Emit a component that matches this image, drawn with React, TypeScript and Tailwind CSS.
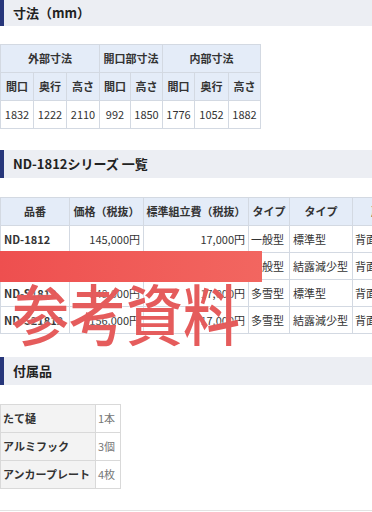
import React from "react";

const font = { fontFamily: '"Noto Sans CJK JP", "Noto Sans", sans-serif' };

function SectionBar({ title, className = "" }: { title: string; className?: string }) {
  return (
    <div className={`flex items-stretch bg-[#eceef3] ${className}`}>
      <div className="w-[4px] bg-[#27367a]" />
      <div className="flex items-center pl-[9px] text-[13px] font-bold text-[#222]">{title}</div>
    </div>
  );
}

const th = "border border-[#d3d9e2] bg-[#e4ecf8] text-[11px] font-bold text-[#333] text-center p-0";
const td = "border border-[#d3d9e2] bg-white text-[11px] text-[#333] p-0";

function SizeTable() {
  const widths = [33, 33, 33, 31, 32, 32, 34, 32];
  return (
    <table className="table-fixed border-collapse w-[260px]">
      <colgroup>
        {widths.map((w, i) => (
          <col key={i} style={{ width: w }} />
        ))}
      </colgroup>
      <thead>
        <tr className="h-[28px]">
          <th colSpan={3} className={th}>外部寸法</th>
          <th colSpan={2} className={th}>開口部寸法</th>
          <th colSpan={3} className={th}>内部寸法</th>
        </tr>
        <tr className="h-[28px]">
          {["間口", "奥行", "高さ", "間口", "高さ", "間口", "奥行", "高さ"].map((t, i) => (
            <th key={i} className={th}>{t}</th>
          ))}
        </tr>
      </thead>
      <tbody>
        <tr className="h-[28px]">
          {["1832", "1222", "2110", "992", "1850", "1776", "1052", "1882"].map((t, i) => (
            <td key={i} className={`${td} text-center`}>{t}</td>
          ))}
        </tr>
      </tbody>
    </table>
  );
}

const series = [
  ["ND-1812", "145,000円", "17,000円", "一般型", "標準型", "背面出入"],
  ["ND-1812K", "150,000円", "17,000円", "一般型", "結露減少型", "背面出入"],
  ["ND-S1812", "148,000円", "17,000円", "多雪型", "標準型", "背面出入"],
  ["ND-S21812", "156,000円", "17,000円", "多雪型", "結露減少型", "背面出入"],
];

function SeriesTable() {
  const widths = [69, 74, 105, 41, 63, 70];
  return (
    <div className="overflow-hidden w-[372px]">
      <table className="table-fixed border-collapse w-[422px]">
        <colgroup>
          {widths.map((w, i) => (
            <col key={i} style={{ width: w }} />
          ))}
        </colgroup>
        <thead>
          <tr className="h-[28px]">
            {["品番", "価格（税抜）", "標準組立費（税抜）", "タイプ", "タイプ", "扉方向"].map((t, i) => (
              <th key={i} className={`${th} whitespace-nowrap`}>{t}</th>
            ))}
          </tr>
        </thead>
        <tbody>
          {series.map((r, i) => (
            <tr key={i} className="h-[27px]">
              <td className={`${td} pl-[3px] font-bold whitespace-nowrap`}>{r[0]}</td>
              <td className={`${td} text-right pr-[3px]`}>{r[1]}</td>
              <td className={`${td} text-right pr-[3px]`}>{r[2]}</td>
              <td className={`${td} pl-[2px] whitespace-nowrap`}>{r[3]}</td>
              <td className={`${td} pl-[3px] whitespace-nowrap`}>{r[4]}</td>
              <td className={`${td} pl-[2px] whitespace-nowrap`}>{r[5]}</td>
            </tr>
          ))}
        </tbody>
      </table>
    </div>
  );
}

function PartsTable() {
  const rows = [
    ["たて樋", "1本"],
    ["アルミフック", "3個"],
    ["アンカープレート", "4枚"],
  ];
  return (
    <table className="table-fixed border-collapse w-[120px]">
      <colgroup>
        <col style={{ width: 95 }} />
        <col style={{ width: 25 }} />
      </colgroup>
      <tbody>
        {rows.map((r, i) => (
          <tr key={i} className="h-[28px]">
            <th className="border border-[#d9d9d9] bg-[#f3f3f3] text-[11px] font-bold text-[#333] text-left pl-[2px] whitespace-nowrap">
              {r[0]}
            </th>
            <td className="border border-[#d9d9d9] bg-white text-[11px] text-[#777] pl-[2px] whitespace-nowrap">
              {r[1]}
            </td>
          </tr>
        ))}
      </tbody>
    </table>
  );
}

export default function App() {
  return (
    <div className="relative w-[372px] h-[512px] overflow-hidden bg-white" style={font}>
      <SectionBar title="寸法（mm）" className="h-[26px]" />
      <div className="mt-[18px]">
        <SizeTable />
      </div>
      <SectionBar title="ND-1812シリーズ 一覧" className="h-[28px] mt-[21px]" />
      <div className="mt-[19px]">
        <SeriesTable />
      </div>
      <SectionBar title="付属品" className="h-[28px] mt-[23px]" />
      <div className="mt-[19px]">
        <PartsTable />
      </div>
      <div className="absolute left-0 right-0 top-[510px] border-t border-[#e3e3e3]" />

      {/* reference-material stamp laid over the price list */}
      <div className="absolute left-0 top-[251px] w-[262px] h-[31px] bg-gradient-to-r from-[#ee4f4f] to-[#f26660]" />
      <div className="absolute left-[12px] top-[279px] text-[57px] leading-none font-medium text-[#e24a4a]/90 whitespace-nowrap origin-top scale-y-[1.15] [text-shadow:0_0_2px_rgba(255,255,255,0.9)]">
        参考資料
      </div>
    </div>
  );
}
